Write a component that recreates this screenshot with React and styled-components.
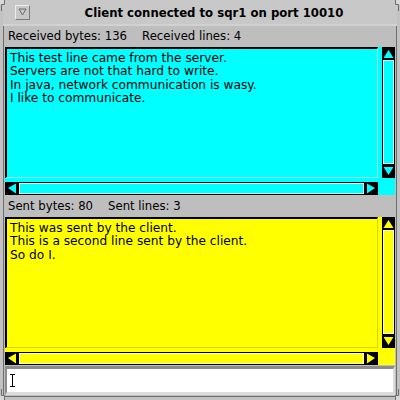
import React from 'react';
import styled, { createGlobalStyle } from 'styled-components';

const Global = createGlobalStyle`
  html, body { margin: 0; padding: 0; background: #bebebe; }
  body { width: 400px; height: 400px; overflow: hidden; font-family: "DejaVu Sans", Verdana, sans-serif; }
`;

const THEMES = {
  cyan: { bg: '#00ffff', light: '#c8ffff', edge: '#9ef5f5' },
  yellow: { bg: '#ffff00', light: '#ffffc0', edge: '#d6d600' },
};

const Window = styled.div`
  position: relative;
  width: 400px;
  height: 400px;
  box-sizing: border-box;
  background: #c2c2c2;
  padding: 0 3px 3px 3px;
  display: flex;
  flex-direction: column;
`;

const Frame = styled.div`
  flex: 1;
  display: flex;
  flex-direction: column;
  border-left: 1px solid #6e6e6e;
  border-right: 1px solid #6e6e6e;
  border-bottom: 1px solid #6e6e6e;
  padding: 0 1px 1px 1px;
  background: #bebebe;
`;

const TitleBar = styled.div`
  height: 24px;
  border-bottom: 2px solid #d2d2d2;
  background: #c8c8c8;
  display: flex;
  align-items: center;
  margin: 0 -2px;
  padding: 0 2px;
`;

const MenuButton = styled.div`
  width: 15px;
  height: 15px;
  box-sizing: border-box;
  margin-left: 10px;
  border-top: 1px solid #ececec;
  border-left: 1px solid #ececec;
  border-right: 1px solid #7c7c7c;
  border-bottom: 1px solid #7c7c7c;
  display: flex;
  align-items: center;
  justify-content: center;
`;

const Title = styled.div`
  flex: 1;
  text-align: center;
  font-weight: bold;
  font-size: 11.7px;
  color: #000;
  padding: 1px 0 0 3px;
`;

const LabelRow = styled.div`
  height: ${p => p.$h}px;
  display: flex;
  align-items: center;
  gap: 15px;
  padding: 0 0 1px 3px;
  font-size: 11.7px;
  color: #000;
  box-sizing: border-box;
`;

const Panel = styled.div`
  display: grid;
  grid-template-columns: 373px 13px;
  grid-template-rows: 131px 13px;
  column-gap: 4px;
  row-gap: 4px;
  height: 148px;
  background: ${p => p.$t.bg};
`;

const TextBox = styled.div`
  box-sizing: border-box;
  border-top: 2px solid #000;
  border-left: 2px solid #000;
  border-right: 1px solid ${p => p.$t.edge};
  border-bottom: 1px solid ${p => p.$t.edge};
  padding: 3px 3px 0 3px;
  font-size: 12.2px;
  line-height: 13.4px;
  white-space: pre;
  overflow: hidden;
  color: #000;
`;

const VBar = styled.div`
  background: #000;
  display: flex;
  flex-direction: column;
  align-items: stretch;
  padding: 1px 1px 2px 1px;
  box-sizing: border-box;
`;

const HBar = styled.div`
  background: #000;
  display: flex;
  align-items: stretch;
  padding: 1px 1px 1px 1px;
  box-sizing: border-box;
`;

const Arrow = styled.div`
  flex: none;
  display: flex;
  align-items: center;
  justify-content: center;
  width: ${p => (p.$v ? 'auto' : '12px')};
  height: ${p => (p.$v ? '11px' : 'auto')};
`;

const Trough = styled.div`
  flex: 1;
  background: ${p => p.$t.bg};
  border: 1px solid ${p => p.$t.light};
  margin: ${p => (p.$v ? '1px 0' : '0 1px')};
`;

const Input = styled.div`
  margin-top: 1px;
  height: 29px;
  box-sizing: border-box;
  background: #fff;
  border-top: 3px solid #8c8c8c;
  border-left: 2px solid #8c8c8c;
  border-right: 2px solid #dcdcdc;
  border-bottom: 3px solid #dcdcdc;
  display: flex;
  align-items: center;
  padding-left: 3px;
`;

const Corner = styled.svg`
  position: absolute;
  width: 11px;
  height: 11px;
  ${p => p.$pos}
`;

function Tri({ dir, color }) {
  const pts = {
    up: '5.5,1 0.5,9 10.5,9',
    down: '0.5,1 10.5,1 5.5,9',
    left: '1,5 9,0.5 9,10.5',
    right: '1,0.5 1,10.5 9,5',
  }[dir];
  const vert = dir === 'up' || dir === 'down';
  return (
    <svg width={vert ? 11 : 10} height={vert ? 10 : 11} viewBox={vert ? '0 0 11 10' : '0 0 10 11'}>
      <polygon points={pts} fill={color} />
    </svg>
  );
}

function VScroll({ t }) {
  return (
    <VBar>
      <Arrow $v><Tri dir="up" color={t.bg} /></Arrow>
      <Trough $v $t={t} />
      <Arrow $v><Tri dir="down" color={t.bg} /></Arrow>
    </VBar>
  );
}

function HScroll({ t }) {
  return (
    <HBar>
      <Arrow><Tri dir="left" color={t.bg} /></Arrow>
      <Trough $t={t} />
      <Arrow><Tri dir="right" color={t.bg} /></Arrow>
    </HBar>
  );
}

function TextPanel({ theme, text }) {
  const t = THEMES[theme];
  return (
    <Panel $t={t}>
      <TextBox $t={t}>{text}</TextBox>
      <VScroll t={t} />
      <HScroll t={t} />
    </Panel>
  );
}

const received = [
  'This test line came from the server.',
  'Servers are not that hard to write.',
  'In java, network communication is wasy.',
  'I like to communicate.',
].join('\n');

const sent = [
  'This was sent by the client.',
  'This is a second line sent by the client.',
  'So do I.',
].join('\n');

export default function App() {
  return (
    <>
      <Global />
      <Window>
        <Frame>
          <TitleBar>
            <MenuButton>
              <svg width="9" height="8" viewBox="0 0 9 8">
                <polygon points="1,1 8,1 4.5,7" fill="none" stroke="#6a6a6a" strokeWidth="1" />
              </svg>
            </MenuButton>
            <Title>Client connected to sqr1 on port 10010</Title>
          </TitleBar>
          <LabelRow $h={21}>
            <span>Received bytes: 136</span>
            <span>Received lines: 4</span>
          </LabelRow>
          <TextPanel theme="cyan" text={received} />
          <LabelRow $h={22}>
            <span>Sent bytes: 80</span>
            <span>Sent lines: 3</span>
          </LabelRow>
          <TextPanel theme="yellow" text={sent} />
          <Input>
            <svg width="5" height="13" viewBox="0 0 5 13">
              <path d="M0 0.5H5M2.5 0.5V12.5M0 12.5H5" stroke="#000" strokeWidth="1" fill="none" />
            </svg>
          </Input>
        </Frame>
        <Corner $pos="left:0;top:0;" viewBox="0 0 11 11">
          <path d="M0 0H4.5V4.5H0Z" fill="#d8d8d8" />
          <path d="M4.5 0V4.5H1.5V11" stroke="#6e6e6e" fill="none" />
        </Corner>
        <Corner $pos="right:0;top:0;" viewBox="0 0 11 11">
          <path d="M6.5 0H11V4.5H6.5Z" fill="#d8d8d8" />
          <path d="M6.5 0V4.5H9.5V11" stroke="#6e6e6e" fill="none" />
        </Corner>
        <Corner $pos="left:0;bottom:0;" viewBox="0 0 11 11">
          <path d="M0 6.5H4.5V11H0Z" fill="#d8d8d8" />
          <path d="M1.5 0V6.5H4.5V11" stroke="#6e6e6e" fill="none" />
        </Corner>
        <Corner $pos="right:0;bottom:0;" viewBox="0 0 11 11">
          <path d="M6.5 6.5H11V11H6.5Z" fill="#d8d8d8" />
          <path d="M9.5 0V6.5H6.5V11" stroke="#6e6e6e" fill="none" />
        </Corner>
      </Window>
    </>
  );
}
